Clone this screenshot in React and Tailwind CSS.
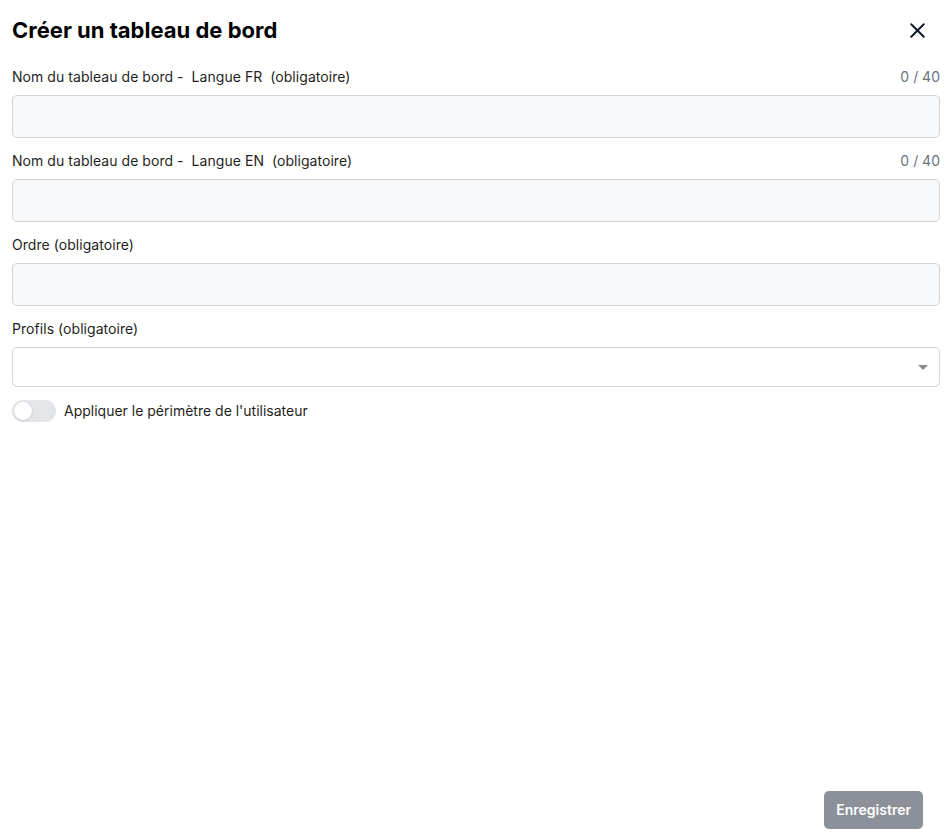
import { X } from 'lucide-react'

// ── sub-components ────────────────────────────────────────────────────────────
function Field({ label, counter, children }) {
  return (
    <div className="flex flex-col">
      <div className="mb-[8px] flex h-[21px] items-center justify-between">
        <span className="whitespace-pre text-sm tracking-[0.05px] text-[#1f1f23]">{label}</span>
        {counter && <span className="text-sm text-[#6b7280]">{counter}</span>}
      </div>
      {children}
    </div>
  )
}

function TextInput() {
  return <input className="h-[43px] w-full rounded-[5px] border border-[#d4d4d8] bg-[#f8f9fb] px-3 text-sm outline-none" />
}

// ── page ──────────────────────────────────────────────────────────────────────
export default function App() {
  return (
    <div className="flex h-screen flex-col bg-white font-['Inter',sans-serif] text-[#111]">
      <div className="flex flex-1 flex-col pl-3 pr-2">
        <div className="flex h-[56px] items-center justify-between pt-[4px]">
          <h1 className="text-[22px] font-bold text-black">Créer un tableau de bord</h1>
          <button className="mr-[10px] text-[#111827]">
            <X size={25} strokeWidth={1.9} />
          </button>
        </div>

        <div className="flex flex-col gap-3 pt-[10px]">
          <Field label="Nom du tableau de bord -  Langue FR  (obligatoire)" counter="0 / 40">
            <TextInput />
          </Field>
          <Field label="Nom du tableau de bord -  Langue EN  (obligatoire)" counter="0 / 40">
            <TextInput />
          </Field>
          <Field label="Ordre (obligatoire)">
            <TextInput />
          </Field>
          <Field label="Profils (obligatoire)">
            <div className="flex h-[40px] w-full items-center justify-end rounded-[5px] border border-[#d4d4d8] bg-white pr-[11px]">
              <span className="h-0 w-0 border-x-[5px] border-t-[5px] border-x-transparent border-t-[#8a8a8a]" />
            </div>
          </Field>
        </div>

        <label className="mt-[13px] flex items-center gap-2">
          <span className="flex h-[22px] w-[44px] items-center rounded-full bg-[#e4e5e9] p-[2px]">
            <span className="h-[18px] w-[18px] rounded-full bg-white shadow-sm" />
          </span>
          <span className="text-sm text-[#1f1f23]">Appliquer le périmètre de l'utilisateur</span>
        </label>
      </div>

      <div className="flex justify-end pb-2 pr-[25px]">
        <button className="h-[38px] rounded-[5px] bg-[#8b9099] px-3 text-sm font-semibold text-white">
          Enregistrer
        </button>
      </div>
    </div>
  )
}
